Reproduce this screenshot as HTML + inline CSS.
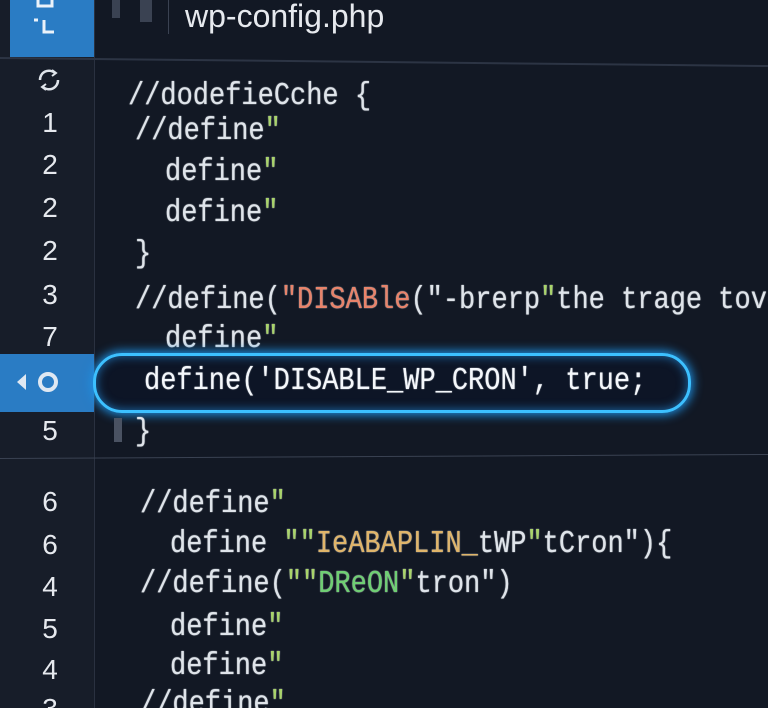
<!DOCTYPE html>
<html><head><style>
html,body{margin:0;padding:0;overflow:hidden;width:768px;height:708px}
body{background:#121824;position:relative;font-family:"Liberation Mono","DejaVu Sans Mono",monospace;color:#dfe4ea}
#w{position:absolute;left:0;top:0;width:768px;height:708px;overflow:hidden}
.gut{position:absolute;left:0;top:0;width:94px;height:708px;background:#171d29;border-right:1px solid #2a3140}
.l{position:absolute;white-space:pre;font-size:27px;line-height:30px;transform:scaleY(1.15);transform-origin:0 50%;text-shadow:0 0 1px #dfe4ea}
.n{position:absolute;left:0;width:100px;text-align:center;font-size:28px;line-height:30px;color:#e6e9ee;font-family:"Liberation Sans",sans-serif}
.g{color:#a9d46a}.r{color:#e8836a}.y{color:#e0b56a}.gr{color:#6fcf73}
</style></head><body><div id="w">
<div class="gut"></div>
<div style="position:absolute;left:10px;top:0;width:84px;height:57px;background:#2a7cc4"></div>
<svg style="position:absolute;left:28px;top:0" width="40" height="40"><path d="M10 0v6h14V0M6 20h4M16 20v12h10" stroke="#eaf2fa" stroke-width="3" fill="none"/></svg>
<div style="position:absolute;left:112px;top:0;width:8px;height:18px;background:#3a4252"></div>
<div style="position:absolute;left:140px;top:0;width:12px;height:22px;background:#3a4252"></div>
<div style="position:absolute;left:168px;top:0;width:1px;height:34px;background:#3a4252"></div>
<div style="position:absolute;left:185px;top:-2px;font-family:'Liberation Sans',sans-serif;font-size:32px;color:#e6e9ee">wp-config.php</div>
<div style="position:absolute;left:0;top:57px;width:768px;height:2px;background:#2c3444;transform:rotate(0.6deg);transform-origin:0 0"></div>
<div style="position:absolute;left:0;top:458px;width:768px;height:1px;background:#3a4252;transform:rotate(-0.3deg);transform-origin:0 0"></div>
<svg style="position:absolute;left:34px;top:65px" width="30" height="30"><path d="M6 15a9 9 0 0 1 15-7M24 15a9 9 0 0 1-15 7" stroke="#dfe4ea" stroke-width="2.5" fill="none"/><path d="M18 5l4 3-4 3M12 19l-4 3 4 3" stroke="#dfe4ea" stroke-width="2" fill="none"/></svg>
<div class="n" style="top:108px">1</div>
<div class="n" style="top:150px">2</div>
<div class="n" style="top:193px">2</div>
<div class="n" style="top:236px">2</div>
<div class="n" style="top:280px">3</div>
<div class="n" style="top:322px">7</div>
<div style="position:absolute;left:0;top:354px;width:94px;height:58px;background:#2a7cc4"></div>
<div style="position:absolute;left:17px;top:374px;width:0;height:0;border-top:8px solid transparent;border-bottom:8px solid transparent;border-right:9px solid #dfe8f2"></div>
<div style="position:absolute;left:38px;top:372px;width:12px;height:12px;border:4px solid #dfe8f2;border-radius:50%"></div>
<div class="n" style="top:416px">5</div>
<div class="n" style="top:487px">6</div>
<div class="n" style="top:530px">6</div>
<div class="n" style="top:572px">4</div>
<div class="n" style="top:614px">5</div>
<div class="n" style="top:655px">4</div>
<div class="n" style="top:694px">3</div>
<div class="l" style="left:128px;top:82px">//dodefieCche {</div>
<div class="l" style="left:135px;top:117px">//define<span class="g">"</span></div>
<div class="l" style="left:165px;top:158px">define<span class="g">"</span></div>
<div class="l" style="left:165px;top:199px">define<span class="g">"</span></div>
<div class="l" style="left:135px;top:240px">}</div>
<div class="l" style="left:135px;top:286px">//define(<span class="r">"DISABle</span>("-brerp<span class="g">"</span>the trage tovere</div>
<div class="l" style="left:165px;top:325px">define<span class="g">"</span></div>
<div style="position:absolute;left:93px;top:353px;width:592px;height:54px;border:3px solid #3cc0ff;border-radius:29px;box-shadow:0 0 10px 2px #1e8fe0,inset 0 0 10px #1e6fb0;background:rgba(10,20,40,.6)"></div>
<div class="l" style="left:144px;top:367px;font-size:27px;color:#f4f7fb">define('DISABLE_WP_CRON', true;</div>
<div style="position:absolute;left:114px;top:418px;width:8px;height:24px;background:#4a5262"></div>
<div class="l" style="left:135px;top:418px">}</div>
<div class="l" style="left:140px;top:490px">//define<span class="g">"</span></div>
<div class="l" style="left:170px;top:530px">define <span class="g">""</span><span class="y">IeABAPLIN_</span>tWP<span class="g">"</span>tCron")<span>{</span></div>
<div class="l" style="left:140px;top:570px">//define(<span class="g">""</span><span class="gr">DReON</span><span class="g">"</span>tron")</div>
<div class="l" style="left:170px;top:613px">define<span class="g">"</span></div>
<div class="l" style="left:170px;top:652px">define<span class="g">"</span></div>
<div class="l" style="left:140px;top:690px">//define<span class="g">"</span></div>
</div></body></html>
